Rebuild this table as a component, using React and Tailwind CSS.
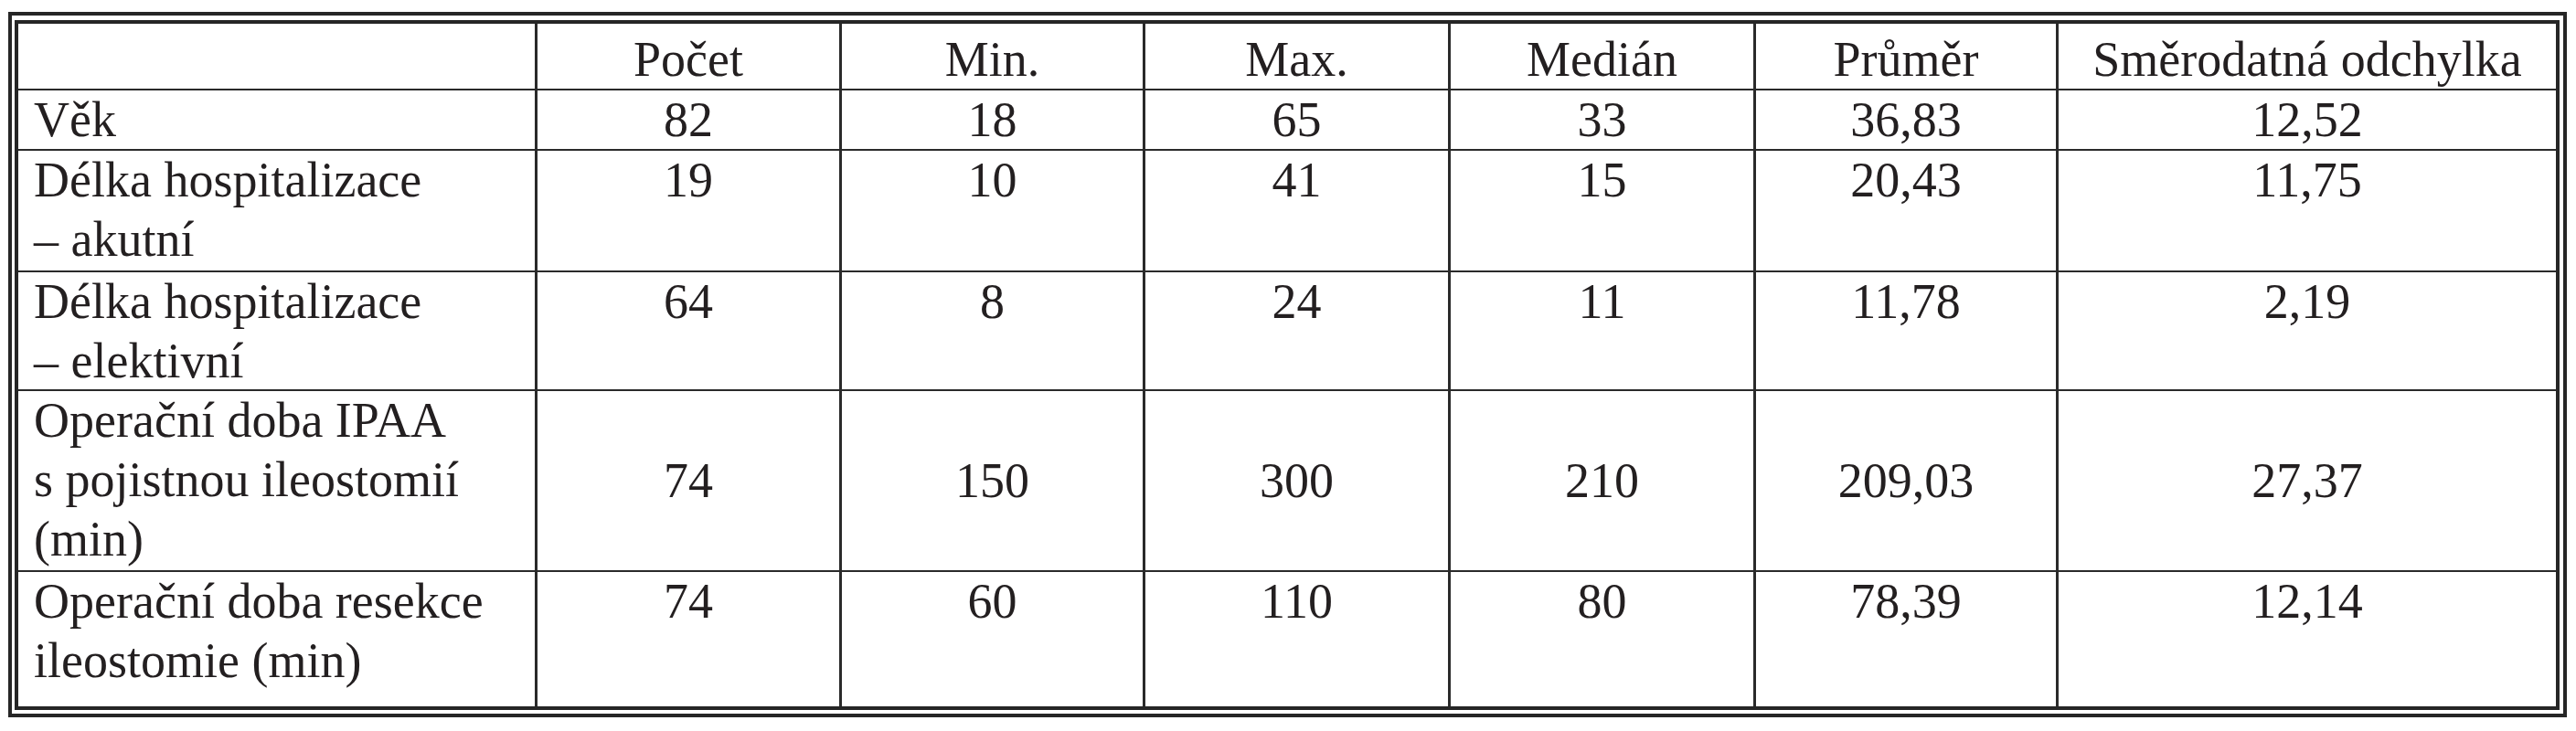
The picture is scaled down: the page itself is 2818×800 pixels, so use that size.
import React from 'react';

const header = ['', 'Počet', 'Min.', 'Max.', 'Medián', 'Průměr', 'Směrodatná odchylka'];

const rows = [
  { label: ['Věk'], values: ['82', '18', '65', '33', '36,83', '12,52'] },
  { label: ['Délka hospitalizace', '– akutní'], values: ['19', '10', '41', '15', '20,43', '11,75'] },
  { label: ['Délka hospitalizace', '– elektivní'], values: ['64', '8', '24', '11', '11,78', '2,19'] },
  {
    label: ['Operační doba IPAA', 's pojistnou ileostomií', '(min)'],
    values: ['74', '150', '300', '210', '209,03', '27,37'],
    middle: true,
  },
  { label: ['Operační doba resekce', 'ileostomie (min)'], values: ['74', '60', '110', '80', '78,39', '12,14'] },
];

const App = () => {
  return (
    <div className="bg-white w-[2818px] h-[800px] pl-[9px] pt-[13px] text-[#231f20] font-[family-name:'Liberation_Serif',serif]">
      {/* double frame round the table */}
      <div className="w-[2799px] border-4 border-[#262626] pl-[3px] pt-[5px] pr-[4px] pb-[4px]">
        <div className="w-[2784px] border-4 border-[#262626]">
          <div className="grid grid-cols-[568px_333px_332px_334px_334px_331px_1fr] grid-rows-[73px_66px_133px_130px_198px_147px] text-[54px] leading-[65px]">
            {header.map((h, i) => (
              <div
                key={'h' + i}
                className={
                  'border-b-2 border-[#2a2a2a] pt-[7px] text-center whitespace-nowrap ' +
                  (i < 6 ? 'border-r-[3px]' : '')
                }
              >
                {h}
              </div>
            ))}
            {rows.map((r, ri) => (
              <React.Fragment key={ri}>
                <div
                  className={
                    'border-r-[3px] border-[#2a2a2a] pl-[17px] whitespace-nowrap ' +
                    (ri < rows.length - 1 ? 'border-b-2' : '')
                  }
                >
                  {r.label.map((l, li) => (
                    <div key={li}>{l}</div>
                  ))}
                </div>
                {r.values.map((v, vi) => (
                  <div
                    key={vi}
                    className={
                      'flex justify-center border-[#2a2a2a] ' +
                      (r.middle ? 'items-center ' : 'items-start ') +
                      (vi < 5 ? 'border-r-[3px] ' : '') +
                      (ri < rows.length - 1 ? 'border-b-2' : '')
                    }
                  >
                    {v}
                  </div>
                ))}
              </React.Fragment>
            ))}
          </div>
        </div>
      </div>
    </div>
  );
};

export default App;
